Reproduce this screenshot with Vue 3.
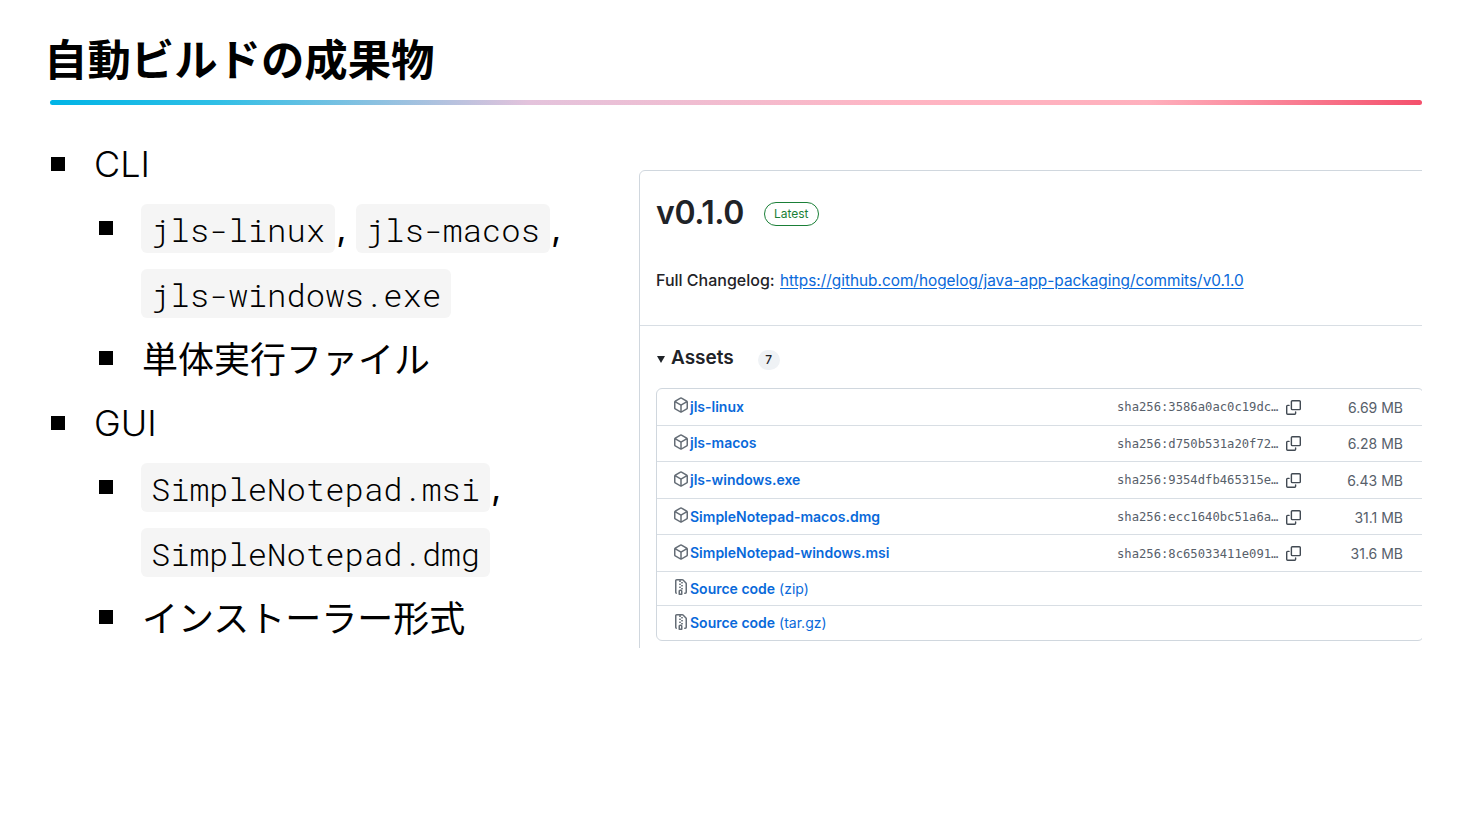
<script setup>
const assets = [
  { name: 'jls-linux', hash: 'sha256:3586a0ac0c19dc…', size: '6.69 MB' },
  { name: 'jls-macos', hash: 'sha256:d750b531a20f72…', size: '6.28 MB' },
  { name: 'jls-windows.exe', hash: 'sha256:9354dfb465315e…', size: '6.43 MB' },
  { name: 'SimpleNotepad-macos.dmg', hash: 'sha256:ecc1640bc51a6a…', size: '31.1 MB' },
  { name: 'SimpleNotepad-windows.msi', hash: 'sha256:8c65033411e091…', size: '31.6 MB' },
]
const sources = ['(zip)', '(tar.gz)']
</script>

<template>
  <div class="slide">
    <h1 class="title">自動ビルドの成果物</h1>
    <div class="rule"></div>
    <div class="body">
      <div class="list">
        <div class="item">
          <span class="bullet"></span>
          <span class="latin">CLI</span>
        </div>
        <div class="item sub">
          <span class="bullet"></span>
          <div class="lines">
            <div class="line"><code>jls-linux</code><span class="comma">,</span><code>jls-macos</code><span class="comma">,</span></div>
            <div class="line"><code>jls-windows.exe</code></div>
          </div>
        </div>
        <div class="item sub">
          <span class="bullet"></span>
          <span class="cjk">単体実行ファイル</span>
        </div>
        <div class="item">
          <span class="bullet"></span>
          <span class="latin">GUI</span>
        </div>
        <div class="item sub">
          <span class="bullet"></span>
          <div class="lines">
            <div class="line"><code>SimpleNotepad.msi</code><span class="comma">,</span></div>
            <div class="line"><code>SimpleNotepad.dmg</code></div>
          </div>
        </div>
        <div class="item sub">
          <span class="bullet"></span>
          <span class="cjk">インストーラー形式</span>
        </div>
      </div>

      <div class="shot">
        <div class="card">
          <div class="release">
            <div class="heading">
              <span class="version">v0.1.0</span>
              <span class="latest">Latest</span>
            </div>
            <p class="changelog">
              <strong>Full Changelog:</strong> <a class="url">https://github.com/hogelog/java-app-packaging/commits/v0.1.0</a>
            </p>
          </div>
          <div class="assets">
            <div class="assets-head">
              <svg class="caret" viewBox="0 0 10 10"><polygon points="1,2 9,2 5,9" /></svg>
              <span class="assets-title">Assets</span>
              <span class="count">7</span>
            </div>
            <div class="table">
              <div v-for="a in assets" :key="a.name" class="row">
                <span class="cell-name">
                  <svg class="ico" viewBox="0 0 16 16"><path d="m8.878.392 5.25 3.045c.54.314.872.89.872 1.514v6.098a1.75 1.75 0 0 1-.872 1.514l-5.25 3.045a1.75 1.75 0 0 1-1.756 0l-5.25-3.045A1.75 1.75 0 0 1 1 11.049V4.951c0-.624.332-1.201.872-1.514L7.122.392a1.75 1.75 0 0 1 1.756 0ZM7.875 1.69l-4.63 2.685L8 7.133l4.755-2.758-4.63-2.685a.248.248 0 0 0-.25 0ZM2.5 5.677v5.372c0 .09.047.171.125.216l4.625 2.683V8.432Zm6.25 8.271 4.625-2.683a.25.25 0 0 0 .125-.216V5.677L8.75 8.432Z" /></svg>
                  <a class="asset-link">{{ a.name }}</a>
                </span>
                <span class="hash">{{ a.hash }}</span>
                <svg class="copy" viewBox="0 0 16 16"><path d="M0 6.75C0 5.784.784 5 1.75 5h1.5a.75.75 0 0 1 0 1.5h-1.5a.25.25 0 0 0-.25.25v7.5c0 .138.112.25.25.25h7.5a.25.25 0 0 0 .25-.25v-1.5a.75.75 0 0 1 1.5 0v1.5A1.75 1.75 0 0 1 9.25 16h-7.5A1.75 1.75 0 0 1 0 14.25Z" /><path d="M5 1.75C5 .784 5.784 0 6.75 0h7.5C15.216 0 16 .784 16 1.75v7.5A1.75 1.75 0 0 1 14.25 11h-7.5A1.75 1.75 0 0 1 5 9.25Zm1.75-.25a.25.25 0 0 0-.25.25v7.5c0 .138.112.25.25.25h7.5a.25.25 0 0 0 .25-.25v-7.5a.25.25 0 0 0-.25-.25Z" /></svg>
                <span class="size">{{ a.size }}</span>
              </div>
              <div v-for="s in sources" :key="s" class="row source">
                <span class="cell-name">
                  <svg class="ico" viewBox="0 0 16 16"><path d="M3.5 1.75v11.5c0 .09.048.173.126.217a.75.75 0 0 1-.752 1.298A1.748 1.748 0 0 1 2 13.25V1.75C2 .784 2.784 0 3.75 0h5.586c.464 0 .909.185 1.237.513l2.914 2.914c.329.328.513.773.513 1.237v8.586A1.75 1.75 0 0 1 12.25 15h-.5a.75.75 0 0 1 0-1.5h.5a.25.25 0 0 0 .25-.25V4.664a.25.25 0 0 0-.073-.177L9.513 1.573a.25.25 0 0 0-.177-.073H7.25a.75.75 0 0 1 0 1.5h-.5a.75.75 0 0 1 0-1.5h-3a.25.25 0 0 0-.25.25Zm3.75 8.75h.5c.966 0 1.75.784 1.75 1.75v3a.75.75 0 0 1-.75.75h-2.5a.75.75 0 0 1-.75-.75v-3c0-.966.784-1.75 1.75-1.75ZM6 5.25a.75.75 0 0 1 .75-.75h.5a.75.75 0 0 1 0 1.5h-.5A.75.75 0 0 1 6 5.25Zm.75 2.25h.5a.75.75 0 0 1 0 1.5h-.5a.75.75 0 0 1 0-1.5ZM8 6.75A.75.75 0 0 1 8.75 6h.5a.75.75 0 0 1 0 1.5h-.5A.75.75 0 0 1 8 6.75ZM8.75 3h.5a.75.75 0 0 1 0 1.5h-.5a.75.75 0 0 1 0-1.5ZM8 9.75A.75.75 0 0 1 8.75 9h.5a.75.75 0 0 1 0 1.5h-.5A.75.75 0 0 1 8 9.75Zm-1 2.5v2.25h1v-2.25a.25.25 0 0 0-.25-.25h-.5a.25.25 0 0 0-.25.25Z" /></svg>
                  <a class="asset-link">Source code</a><span class="kind">{{ s }}</span>
                </span>
              </div>
            </div>
          </div>
        </div>
      </div>
    </div>
  </div>
</template>

<style>
html, body { margin: 0; background: #fff; }
</style>

<style scoped>
.slide {
  width: 1470px;
  height: 828px;
  box-sizing: border-box;
  padding: 27px 48px 0 50px;
  overflow: hidden;
  background: #fff;
  color: #000;
  font-family: "Noto Sans CJK JP", "Noto Sans", sans-serif;
}
.title {
  margin: 0 0 0 -6px;
  height: 60px;
  font-size: 43.4px;
  line-height: 60px;
  font-weight: 700;
}
.rule {
  margin-top: 13px;
  height: 5px;
  border-radius: 3px;
  background: linear-gradient(90deg, #00b4e6 0%, #2fbfe6 12%, #e4c3dc 35%, #ffb5c3 62%, #ffb0bd 80%, #f4506c 100%);
}
.body {
  display: grid;
  grid-template-columns: 589px 783px;
  margin-top: 26.5px;
}
.list {
  font-size: 36px;
  line-height: 64.8px;
}
.item {
  display: flex;
  align-items: flex-start;
  min-height: 64.8px;
}
.bullet {
  flex: none;
  width: 14px;
  height: 14px;
  margin: 25px 29px 0 1px;
  background: #000;
}
.item.sub { padding-left: 48px; }
.item.sub .bullet { margin-right: 28px; }
.latin {
  font-family: Inter, "Noto Sans", sans-serif;
  font-weight: 300;
}
.cjk {
  font-weight: 400;
  margin: -1px 0 0 1px;
}
.line {
  display: flex;
  align-items: center;
  height: 64.8px;
}
code {
  display: block;
  height: 49px;
  line-height: 52px;
  padding: 0 10px;
  border-radius: 6px;
  background: #f5f5f5;
  font-family: "Roboto Mono", "Liberation Mono", monospace;
  font-size: 32.25px;
  font-weight: 300;
  white-space: nowrap;
}
.comma {
  display: block;
  width: 20.5px;
  padding-left: 1px;
  box-sizing: border-box;
  font-family: Inter, sans-serif;
  font-size: 36px;
  font-weight: 400;
}
.shot {
  width: 783px;
  height: 478px;
  margin-top: 38.5px;
  overflow: hidden;
}
.card {
  width: 802px;
  height: 520px;
  box-sizing: border-box;
  border: 1px solid #d0d7de;
  border-radius: 6px;
  font-family: Inter, "Liberation Sans", sans-serif;
  color: #1f2328;
}
.release {
  height: 155px;
  box-sizing: border-box;
  padding: 16px 16px 0;
  border-bottom: 1px solid #d8dee4;
}
.heading {
  display: flex;
  align-items: center;
  height: 50px;
}
.version {
  font-size: 32px;
  font-weight: 600;
  letter-spacing: -0.4px;
}
.latest {
  margin-left: 20px;
  margin-top: 4px;
  height: 22px;
  line-height: 22px;
  padding: 0 9px;
  border: 1px solid #1a7f37;
  border-radius: 12px;
  font-size: 12px;
  font-weight: 400;
  color: #1a7f37;
}
.changelog {
  margin: 31px 0 0;
  height: 24px;
  line-height: 24px;
  font-size: 15.37px;
  white-space: nowrap;
}
.changelog strong {
  font-size: 16px;
  font-weight: 500;
  margin-right: 1px;
}
.url {
  color: #0969da;
  text-decoration: underline;
  text-underline-offset: 2px;
}
.assets { padding: 17px 16px 0; }
.assets-head {
  display: flex;
  align-items: center;
  height: 30px;
  margin-top: -1px;
}
.caret {
  width: 10px;
  height: 10px;
  margin-top: 3px;
  margin-right: 5px;
  fill: #1f2328;
}
.assets-title {
  font-size: 19px;
  font-weight: 600;
}
.count {
  margin-left: 24px;
  margin-top: 5px;
  width: 22px;
  height: 20px;
  line-height: 20px;
  border-radius: 10px;
  background: #eff2f5;
  font-size: 12px;
  font-weight: 500;
  text-align: center;
}
.table {
  margin-top: 16px;
  border: 1px solid #d0d7de;
  border-radius: 6px;
}
.row {
  display: flex;
  align-items: center;
  height: 36.6px;
  box-sizing: border-box;
  padding: 0 20px 0 16px;
  border-bottom: 1px solid #d8dee4;
}
.row.source { height: 34.4px; }
.row.source:last-child { height: 33.6px; border-bottom: 0; }
.cell-name {
  flex: 1;
  display: flex;
  align-items: center;
  min-width: 0;
  margin-top: -0.9px;
  font-size: 14px;
}
.ico {
  flex: none;
  width: 16px;
  height: 16px;
  margin-right: 1px;
  margin-top: -2px;
  fill: #656d76;
}
.asset-link {
  color: #0969da;
  font-weight: 600;
}
.kind {
  margin-left: 4px;
  color: #0969da;
}
.hash {
  width: 161px;
  margin-top: 1px;
  font-family: "DejaVu Sans Mono", "Liberation Mono", monospace;
  font-size: 12.2px;
  color: #57606a;
  white-space: nowrap;
}
.copy {
  flex: none;
  margin-left: 8px;
  margin-top: 1px;
  width: 15px;
  height: 15px;
  fill: #424a53;
}
.size {
  width: 102px;
  margin-top: 1px;
  text-align: right;
  font-size: 14px;
  color: #57606a;
}
</style>
